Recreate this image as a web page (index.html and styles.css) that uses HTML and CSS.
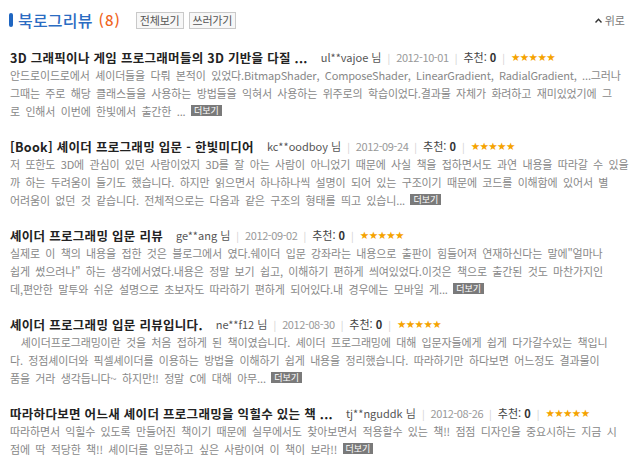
FILE: index.html
```html
<!DOCTYPE html>
<html lang="ko">
<head>
<meta charset="utf-8">
<title>북로그리뷰</title>
<link rel="stylesheet" href="styles.css">
</head>
<body>
<div class="page">
  <header class="head">
    <span class="bar"></span>
    <h2 class="head-title">북로그리뷰</h2>
    <span class="count">(8)</span>
    <span class="btn">전체보기</span>
    <span class="btn">쓰러가기</span>
    <span class="top"><svg class="caret" width="7" height="5" viewBox="0 0 7 5"><path d="M0.5 4.5 L3.5 1.2 L6.5 4.5" fill="none" stroke="#333" stroke-width="1.4"/></svg>위로</span>
  </header>

  <ul class="list">
    <li class="review">
      <div class="row">
        <span class="rtitle">3D 그래픽이나 게임 프로그래머들의 3D 기반을 다질 ...</span>
        <span class="author">ul**vajoe 님</span><span class="sep">|</span>
        <span class="date">2012-10-01</span><span class="sep">|</span>
        <span class="rec">추천: <b>0</b></span><span class="sep">|</span>
        <span class="stars">★★★★★</span>
      </div>
      <p class="text">안드로이드로에서 셰이더들을 다뤄 본적이 있었다.BitmapShader, ComposeShader, LinearGradient, RadialGradient, ...그러나<br>그때는 주로 해당 클래스들을 사용하는 방법들을 익혀서 사용하는 위주로의 학습이었다.결과물 자체가 화려하고 재미있었기에 그<br>로 인해서 이번에 한빛에서 출간한 ... <span class="more">더보기</span></p>
    </li>
    <li class="review">
      <div class="row">
        <span class="rtitle">[Book] 셰이더 프로그래밍 입문 - 한빛미디어</span>
        <span class="author">kc**oodboy 님</span><span class="sep">|</span>
        <span class="date">2012-09-24</span><span class="sep">|</span>
        <span class="rec">추천: <b>0</b></span><span class="sep">|</span>
        <span class="stars">★★★★★</span>
      </div>
      <p class="text">저 또한도 3D에 관심이 있던 사람이었지 3D를 잘 아는 사람이 아니었기 때문에 사실 책을 접하면서도 과연 내용을 따라갈 수 있을<br>까 하는 두려움이 들기도 했습니다. 하지만 읽으면서 하나하나씩 설명이 되어 있는 구조이기 때문에 코드를 이해함에 있어서 별<br>어려움이 없던 것 같습니다. 전체적으로는 다음과 같은 구조의 형태를 띄고 있습니... <span class="more">더보기</span></p>
    </li>
    <li class="review">
      <div class="row">
        <span class="rtitle">셰이더 프로그래밍 입문 리뷰</span>
        <span class="author">ge**ang 님</span><span class="sep">|</span>
        <span class="date">2012-09-02</span><span class="sep">|</span>
        <span class="rec">추천: <b>0</b></span><span class="sep">|</span>
        <span class="stars">★★★★★</span>
      </div>
      <p class="text">실제로 이 책의 내용을 접한 것은 블로그에서 였다.쉐이더 입문 강좌라는 내용으로 출판이 힘들어져 연재하신다는 말에"얼마나<br>쉽게 썼으려나" 하는 생각에서였다.내용은 정말 보기 쉽고, 이해하기 편하게 씌여있었다.이것은 책으로 출간된 것도 마찬가지인<br>데,편안한 말투와 쉬운 설명으로 초보자도 따라하기 편하게 되어있다.내 경우에는 모바일 게... <span class="more">더보기</span></p>
    </li>
    <li class="review">
      <div class="row">
        <span class="rtitle">셰이더 프로그래밍 입문 리뷰입니다.</span>
        <span class="author">ne**f12 님</span><span class="sep">|</span>
        <span class="date">2012-08-30</span><span class="sep">|</span>
        <span class="rec">추천: <b>0</b></span><span class="sep">|</span>
        <span class="stars">★★★★★</span>
      </div>
      <p class="text">&nbsp; 셰이더프로그래밍이란 것을 처음 접하게 된 책이였습니다. 셰이더 프로그래밍에 대해 입문자들에게 쉽게 다가갈수있는 책입니<br>다. 정점셰이더와 픽셀셰이더를 이용하는 방법을 이해하기 쉽게 내용을 정리했습니다. 따라하기만 하다보면 어느정도 결과물이<br>품을 거라 생각듭니다~ 하지만!! 정말 C에 대해 아무... <span class="more">더보기</span></p>
    </li>
    <li class="review">
      <div class="row">
        <span class="rtitle">따라하다보면 어느새 셰이더 프로그래밍을 익힐수 있는 책 ...</span>
        <span class="author">tj**nguddk 님</span><span class="sep">|</span>
        <span class="date">2012-08-26</span><span class="sep">|</span>
        <span class="rec">추천: <b>0</b></span><span class="sep">|</span>
        <span class="stars">★★★★★</span>
      </div>
      <p class="text">따라하면서 익힐수 있도록 만들어진 책이기 때문에 실무에서도 찾아보면서 적용할수 있는 책!! 점점 디자인을 중요시하는 지금 시<br>점에 딱 적당한 책!! 셰이더를 입문하고 싶은 사람이여 이 책이 보라!! <span class="more">더보기</span></p>
    </li>
  </ul>
</div>
</body>
</html>
```

FILE: styles.css
```css
html, body {
  margin: 0;
  padding: 0;
  background: #fff;
}
body {
  font-family: "Noto Sans CJK KR", "Noto Sans", sans-serif;
  color: #333;
}
.page {
  width: 622px;
  padding: 0 8px 0 10px;
}
.head {
  height: 40px;
  display: flex;
  align-items: center;
}
.bar {
  width: 4px;
  height: 14px;
  border-radius: 2px;
  background: #1f66c1;
  margin-left: -1px;
}
.head-title {
  margin: 0 0 0 5px;
  font-size: 16px;
  font-weight: 500;
  color: #2b6cc2;
  letter-spacing: 0.2px;
  line-height: 18px;
}
.count {
  margin-left: 6px;
  font-size: 15px;
  font-weight: 500;
  color: #f0661e;
  line-height: 18px;
  letter-spacing: 1px;
}
.btn {
  margin-left: 5px;
  height: 15px;
  line-height: 15px;
  padding: 0 3px;
  border: 1px solid #c9c9c9;
  background: #f7f7f7;
  font-size: 11px;
  color: #555;
  letter-spacing: -0.2px;
}
.count + .btn {
  margin-left: 15px;
}
.top {
  margin-left: auto;
  margin-right: 7px;
  display: flex;
  align-items: center;
  font-size: 11px;
  color: #777;
}
.caret {
  margin-right: 3px;
}
.list {
  list-style: none;
  margin: 0;
  padding: 8px 0 0 0;
}
.review {
  margin-bottom: 17px;
}
.row {
  display: flex;
  align-items: center;
  height: 18px;
  white-space: nowrap;
}
.rtitle {
  font-size: 12.5px;
  font-weight: 700;
  color: #222;
  letter-spacing: 0.3px;
  margin-right: 13px;
}
.author {
  font-size: 11px;
  color: #555;
}
.sep {
  font-size: 10px;
  color: #d0d0d0;
  margin: 0 6px;
}
.date {
  font-size: 11px;
  color: #999;
  letter-spacing: -0.4px;
}
.rec {
  font-size: 11px;
  color: #444;
}
.rec b {
  color: #333;
}
.stars {
  font-family: "DejaVu Sans", sans-serif;
  font-size: 10.5px;
  color: #f5a300;
  letter-spacing: -0.6px;
}
.text {
  margin: 0;
  font-size: 11px;
  line-height: 18px;
  color: #888;
  white-space: nowrap;
  letter-spacing: -0.15px;
  word-spacing: 2.5px;
}
.more {
  display: inline-block;
  vertical-align: 2px;
  background: #7a7a7a;
  color: #fff;
  font-size: 9px;
  line-height: 11px;
  padding: 0 3px;
  letter-spacing: 0;
  word-spacing: 0;
}
```
